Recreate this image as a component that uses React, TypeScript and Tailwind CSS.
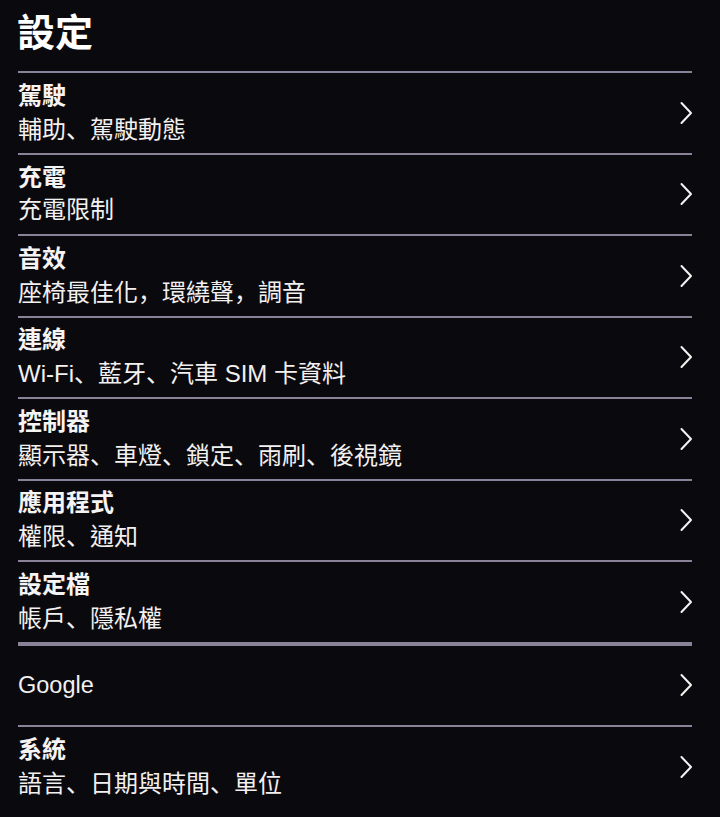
import React from "react";

type Item = { title: string; sub?: string; thick?: boolean };

const items: Item[] = [
  { title: "駕駛", sub: "輔助、駕駛動態" },
  { title: "充電", sub: "充電限制" },
  { title: "音效", sub: "座椅最佳化，環繞聲，調音" },
  { title: "連線", sub: "Wi-Fi、藍牙、汽車 SIM 卡資料" },
  { title: "控制器", sub: "顯示器、車燈、鎖定、雨刷、後視鏡" },
  { title: "應用程式", sub: "權限、通知" },
  { title: "設定檔", sub: "帳戶、隱私權" },
];

function Punct({ text }: { text: string }) {
  const parts = text.split(/([、，])/);
  return (
    <>
      {parts.map((p, i) =>
        p === "、" || p === "，" ? (
          <span key={i} className="font-['Noto_Sans_CJK_SC',sans-serif]">
            {p}
          </span>
        ) : (
          <span key={i}>{p}</span>
        )
      )}
    </>
  );
}

function Chevron() {
  return (
    <svg width="14" height="24" viewBox="0 0 14 24" className="shrink-0">
      <polyline
        points="2.5,2 12,12 2.5,22"
        fill="none"
        stroke="#f5f2f2"
        strokeWidth="2"
        strokeLinecap="round"
        strokeLinejoin="round"
      />
    </svg>
  );
}

function Divider({ thick }: { thick?: boolean }) {
  return (
    <div
      className={`ml-[18px] mr-[28px] bg-[#8a8298] ${thick ? "h-[4px]" : "h-[2px]"}`}
    />
  );
}

function Row({ item }: { item: Item }) {
  return (
    <div className="flex h-[79.5px] items-center pl-[18px] pr-[27px]">
      <div className="flex flex-1 flex-col justify-center">
        <div className="text-[24px] font-bold leading-8 text-[#f6f3f3]">
          <Punct text={item.title} />
        </div>
        {item.sub && (
          <div className="text-[24px] leading-8 text-[#f3f0f0]">
            <Punct text={item.sub} />
          </div>
        )}
      </div>
      <Chevron />
    </div>
  );
}

export default function App() {
  return (
    <div className="min-h-[817px] w-[720px] overflow-hidden bg-[#0a090e] font-['Liberation_Sans','Noto_Sans_CJK_TC',sans-serif]">
      <div className="flex h-[71px] items-center pb-[6px] pl-[17px]">
        <h1 className="text-[38px] font-bold leading-none text-white">設定</h1>
      </div>
      {items.map((it, i) => (
        <React.Fragment key={i}>
          <Divider />
          <Row item={it} />
        </React.Fragment>
      ))}
      <Divider thick />
      <div className="flex h-[79.5px] items-center pl-[18px] pr-[27px]">
        <div className="flex-1 text-[23.5px] leading-8 text-[#f3f0f0]">Google</div>
        <Chevron />
      </div>
      <Divider />
      <Row item={{ title: "系統", sub: "語言、日期與時間、單位" }} />
    </div>
  );
}
